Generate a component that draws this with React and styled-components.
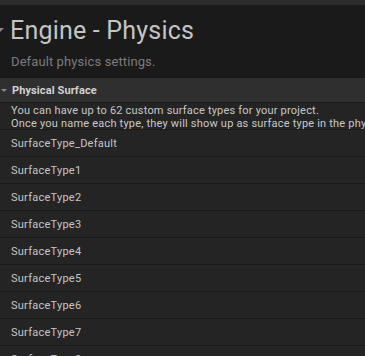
import React from 'react';
import styled, { createGlobalStyle } from 'styled-components';

const GlobalStyle = createGlobalStyle`
  html, body {
    margin: 0;
    padding: 0;
    background: #1a1a1a;
    overflow: hidden;
  }
  body {
    font-family: Roboto, "Liberation Sans", sans-serif;
  }
`;

const Page = styled.div`
  width: 365px;
  height: 356px;
  overflow: hidden;
  background: #1a1a1a;
  display: flex;
  flex-direction: column;
`;

const TopStrip = styled.div`
  height: 5px;
  background: #2c2c2c;
  flex-shrink: 0;
`;

const Banner = styled.div`
  height: 73px;
  flex-shrink: 0;
  display: flex;
  flex-direction: column;
  padding-top: 10px;
  box-sizing: border-box;
`;

const TitleRow = styled.div`
  display: flex;
  align-items: center;
  height: 30px;
`;

// collapse arrow, clipped by the left edge
const Arrow = styled.span`
  width: 0;
  height: 0;
  border-left: ${p => p.$size}px solid transparent;
  border-right: ${p => p.$size}px solid transparent;
  border-top: ${p => p.$size}px solid ${p => p.$color};
  margin-left: ${p => p.$offset}px;
  flex-shrink: 0;
`;

const Title = styled.h1`
  margin: 0 0 0 6px;
  font-size: 25px;
  font-weight: 400;
  color: #c4c4c4;
  letter-spacing: 0.2px;
`;

const Subtitle = styled.div`
  margin: 9px 0 0 11px;
  font-size: 13px;
  color: #7c7c7c;
  letter-spacing: 0.1px;
`;

const SectionHeader = styled.div`
  height: 25px;
  flex-shrink: 0;
  background: #2f2f2f;
  display: flex;
  align-items: center;
  border-bottom: 1px solid #1a1a1a;
  box-sizing: border-box;
`;

const SectionTitle = styled.span`
  margin-left: 5px;
  font-size: 11px;
  font-weight: 700;
  color: #d2d2d2;
  letter-spacing: 0.1px;
`;

const Description = styled.div`
  height: 27px;
  flex-shrink: 0;
  background: #242424;
  border-bottom: 1px solid #1a1a1a;
  box-sizing: border-box;
  padding: 1px 0 0 11px;
  font-size: 11px;
  line-height: 13px;
  color: #c8c8c8;
  letter-spacing: 0.2px;
  white-space: nowrap;
`;

const Row = styled.div`
  height: 27px;
  flex-shrink: 0;
  background: #242424;
  border-bottom: 1px solid #1a1a1a;
  box-sizing: border-box;
  display: flex;
  align-items: center;
  padding-left: 11px;
  font-size: 11px;
  color: #c6c6c6;
  letter-spacing: 0.25px;
`;

const surfaces = [
  'SurfaceType_Default',
  'SurfaceType1',
  'SurfaceType2',
  'SurfaceType3',
  'SurfaceType4',
  'SurfaceType5',
  'SurfaceType6',
  'SurfaceType7',
  'SurfaceType8',
];

const App = () => {
  return (
    <>
      <GlobalStyle />
      <Page>
        <TopStrip />
        <Banner>
          <TitleRow>
            <Arrow $size={4} $color="#8a8a8a" $offset={-4} />
            <Title>Engine - Physics</Title>
          </TitleRow>
          <Subtitle>Default physics settings.</Subtitle>
        </Banner>
        <SectionHeader>
          <Arrow $size={3} $color="#8a8a8a" $offset={1} />
          <SectionTitle>Physical Surface</SectionTitle>
        </SectionHeader>
        <Description>
          You can have up to 62 custom surface types for your project.
          <br />
          Once you name each type, they will show up as surface type in the physical material.
        </Description>
        {surfaces.map(name => (
          <Row key={name}>{name}</Row>
        ))}
      </Page>
    </>
  );
};

export default App;
